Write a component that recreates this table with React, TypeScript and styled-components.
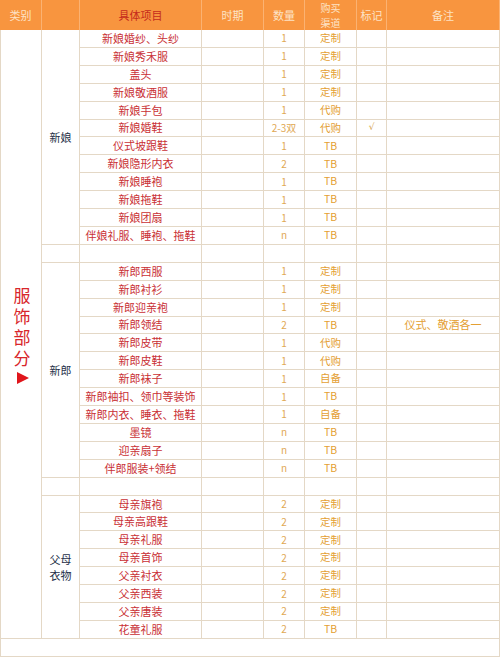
import React from "react";
import styled, { createGlobalStyle } from "styled-components";

const Global = createGlobalStyle`
  html, body { margin: 0; padding: 0; background: #ffffff; }
  body { font-family: "Noto Sans CJK SC", "Noto Sans", sans-serif; }
`;

const LINE = "#e4d8c6";
const ITEM_RED = "#c93035";
const GOLD = "#e4a033";
const QTY = "#dfa955";
const NAVY = "#243049";

type Tone = "item" | "qty" | "channel" | "mark" | "note" | "plain";

const toneColor: Record<Tone, string> = {
  item: ITEM_RED,
  qty: QTY,
  channel: GOLD,
  mark: "#d49f4e",
  note: GOLD,
  plain: "#333",
};

const toneSize: Record<Tone, string> = {
  item: "11px",
  qty: "10px",
  channel: "10.5px",
  mark: "9px",
  note: "11px",
  plain: "11px",
};

const Table = styled.div`
  width: 500px;
  display: grid;
  grid-template-columns: 42px 38px 122px 62px 41px 52px 30px 1fr;
  grid-template-rows: 30px repeat(34, 17.91px) 18px;
  box-sizing: border-box;
`;

const HeadCell = styled.div<{ $col: number; $accent?: boolean }>`
  grid-row: 1;
  grid-column: ${(p) => p.$col};
  background: #f8953f;
  border-right: 1px solid #fbb272;
  color: ${(p) => (p.$accent ? "#c52a1c" : "#fde3c6")};
  font-size: 11px;
  display: flex;
  flex-direction: column;
  align-items: center;
  justify-content: center;
  text-align: center;
  box-sizing: border-box;
  &:last-child { border-right: none; }
`;

const HeadLine = styled.span<{ $small?: boolean }>`
  display: block;
  font-size: ${(p) => (p.$small ? "10px" : "11px")};
  line-height: ${(p) => (p.$small ? "15px" : "16px")};
`;

const Cell = styled.div<{ $row: number; $col: number; $tone: Tone }>`
  grid-row: ${(p) => p.$row};
  grid-column: ${(p) => p.$col};
  border-right: 1px solid ${LINE};
  border-bottom: 1px solid ${LINE};
  box-sizing: border-box;
  display: flex;
  align-items: center;
  justify-content: center;
  white-space: nowrap;
  color: ${(p) => toneColor[p.$tone]};
  font-size: ${(p) => toneSize[p.$tone]};
  font-family: ${(p) =>
    p.$tone === "mark" ? '"DejaVu Sans", sans-serif' : '"Noto Sans CJK SC", "Noto Sans", sans-serif'};
  line-height: 1;
`;

const SectionCell = styled.div`
  grid-row: 2 / span 34;
  grid-column: 1;
  border-left: 1px solid ${LINE};
  border-right: 1px solid ${LINE};
  border-bottom: 1px solid ${LINE};
  box-sizing: border-box;
  display: flex;
  flex-direction: column;
  align-items: center;
  justify-content: center;
  gap: 4px;
`;

const BigChars = styled.div`
  color: #d8262b;
  font-size: 17px;
  line-height: 21px;
  width: 18px;
  text-align: center;
  padding-left: 2px;
`;

const Triangle = styled.div`
  width: 0;
  height: 0;
  margin-left: 3px;
  border-left: 12px solid #e0161c;
  border-top: 6px solid transparent;
  border-bottom: 6px solid transparent;
`;

const GroupCell = styled.div<{ $row: number; $span: number }>`
  grid-row: ${(p) => p.$row} / span ${(p) => p.$span};
  grid-column: 2;
  border-right: 1px solid ${LINE};
  border-bottom: 1px solid ${LINE};
  box-sizing: border-box;
  display: flex;
  align-items: center;
  justify-content: center;
  text-align: center;
  color: ${NAVY};
  font-size: 11px;
  line-height: 16px;
`;

const FooterRow = styled.div`
  grid-row: 36;
  grid-column: 1 / -1;
  border-left: 1px solid ${LINE};
  border-right: 1px solid ${LINE};
  border-bottom: 1px solid ${LINE};
  box-sizing: border-box;
`;

type Item = { name: string; qty: string; ch: string; mark?: string; note?: string } | null;

const groups: { label: React.ReactNode; items: Item[] }[] = [
  {
    label: "新娘",
    items: [
      { name: "新娘婚纱、头纱", qty: "1", ch: "定制" },
      { name: "新娘秀禾服", qty: "1", ch: "定制" },
      { name: "盖头", qty: "1", ch: "定制" },
      { name: "新娘敬酒服", qty: "1", ch: "定制" },
      { name: "新娘手包", qty: "1", ch: "代购" },
      { name: "新娘婚鞋", qty: "2-3双", ch: "代购", mark: "√" },
      { name: "仪式坡跟鞋", qty: "1", ch: "TB" },
      { name: "新娘隐形内衣", qty: "2", ch: "TB" },
      { name: "新娘睡袍", qty: "1", ch: "TB" },
      { name: "新娘拖鞋", qty: "1", ch: "TB" },
      { name: "新娘团扇", qty: "1", ch: "TB" },
      { name: "伴娘礼服、睡袍、拖鞋", qty: "n", ch: "TB" },
    ],
  },
  { label: "", items: [null] },
  {
    label: "新郎",
    items: [
      { name: "新郎西服", qty: "1", ch: "定制" },
      { name: "新郎衬衫", qty: "1", ch: "定制" },
      { name: "新郎迎亲袍", qty: "1", ch: "定制" },
      { name: "新郎领结", qty: "2", ch: "TB", note: "仪式、敬酒各一" },
      { name: "新郎皮带", qty: "1", ch: "代购" },
      { name: "新郎皮鞋", qty: "1", ch: "代购" },
      { name: "新郎袜子", qty: "1", ch: "自备" },
      { name: "新郎袖扣、领巾等装饰", qty: "1", ch: "TB" },
      { name: "新郎内衣、睡衣、拖鞋", qty: "1", ch: "自备" },
      { name: "墨镜", qty: "n", ch: "TB" },
      { name: "迎亲扇子", qty: "n", ch: "TB" },
      { name: "伴郎服装+领结", qty: "n", ch: "TB" },
    ],
  },
  { label: "", items: [null] },
  {
    label: (
      <>
        父母
        <br />
        衣物
      </>
    ),
    items: [
      { name: "母亲旗袍", qty: "2", ch: "定制" },
      { name: "母亲高跟鞋", qty: "2", ch: "定制" },
      { name: "母亲礼服", qty: "2", ch: "定制" },
      { name: "母亲首饰", qty: "2", ch: "定制" },
      { name: "父亲衬衣", qty: "2", ch: "定制" },
      { name: "父亲西装", qty: "2", ch: "定制" },
      { name: "父亲唐装", qty: "2", ch: "定制" },
      { name: "花童礼服", qty: "2", ch: "TB" },
    ],
  },
];

const headers: { lines: string[]; accent?: boolean }[] = [
  { lines: ["类别"] },
  { lines: [] },
  { lines: ["具体项目"], accent: true },
  { lines: ["时期"] },
  { lines: ["数量"] },
  { lines: ["购买", "渠道"] },
  { lines: ["标记"] },
  { lines: ["备注"] },
];

export default function App() {
  const cells: React.ReactNode[] = [];
  let row = 2;
  groups.forEach((g, gi) => {
    cells.push(
      <GroupCell key={`g${gi}`} $row={row} $span={g.items.length}>
        {g.label}
      </GroupCell>
    );
    g.items.forEach((it, ii) => {
      const r = row + ii;
      const vals: [string, Tone][] = [
        [it?.name ?? "", "item"],
        ["", "plain"],
        [it?.qty ?? "", "qty"],
        [it?.ch ?? "", "channel"],
        [it?.mark ?? "", "mark"],
        [it?.note ?? "", "note"],
      ];
      vals.forEach(([v, tone], ci) => {
        cells.push(
          <Cell key={`c${r}-${ci}`} $row={r} $col={ci + 3} $tone={tone}>
            {v}
          </Cell>
        );
      });
    });
    row += g.items.length;
  });

  return (
    <>
      <Global />
      <Table>
        {headers.map((h, i) => (
          <HeadCell key={i} $col={i + 1} $accent={h.accent}>
            {h.lines.map((l) => (
              <HeadLine key={l} $small={h.lines.length > 1}>
                {l}
              </HeadLine>
            ))}
          </HeadCell>
        ))}
        <SectionCell>
          <BigChars>服饰部分</BigChars>
          <Triangle />
        </SectionCell>
        {cells}
        <FooterRow />
      </Table>
    </>
  );
}
